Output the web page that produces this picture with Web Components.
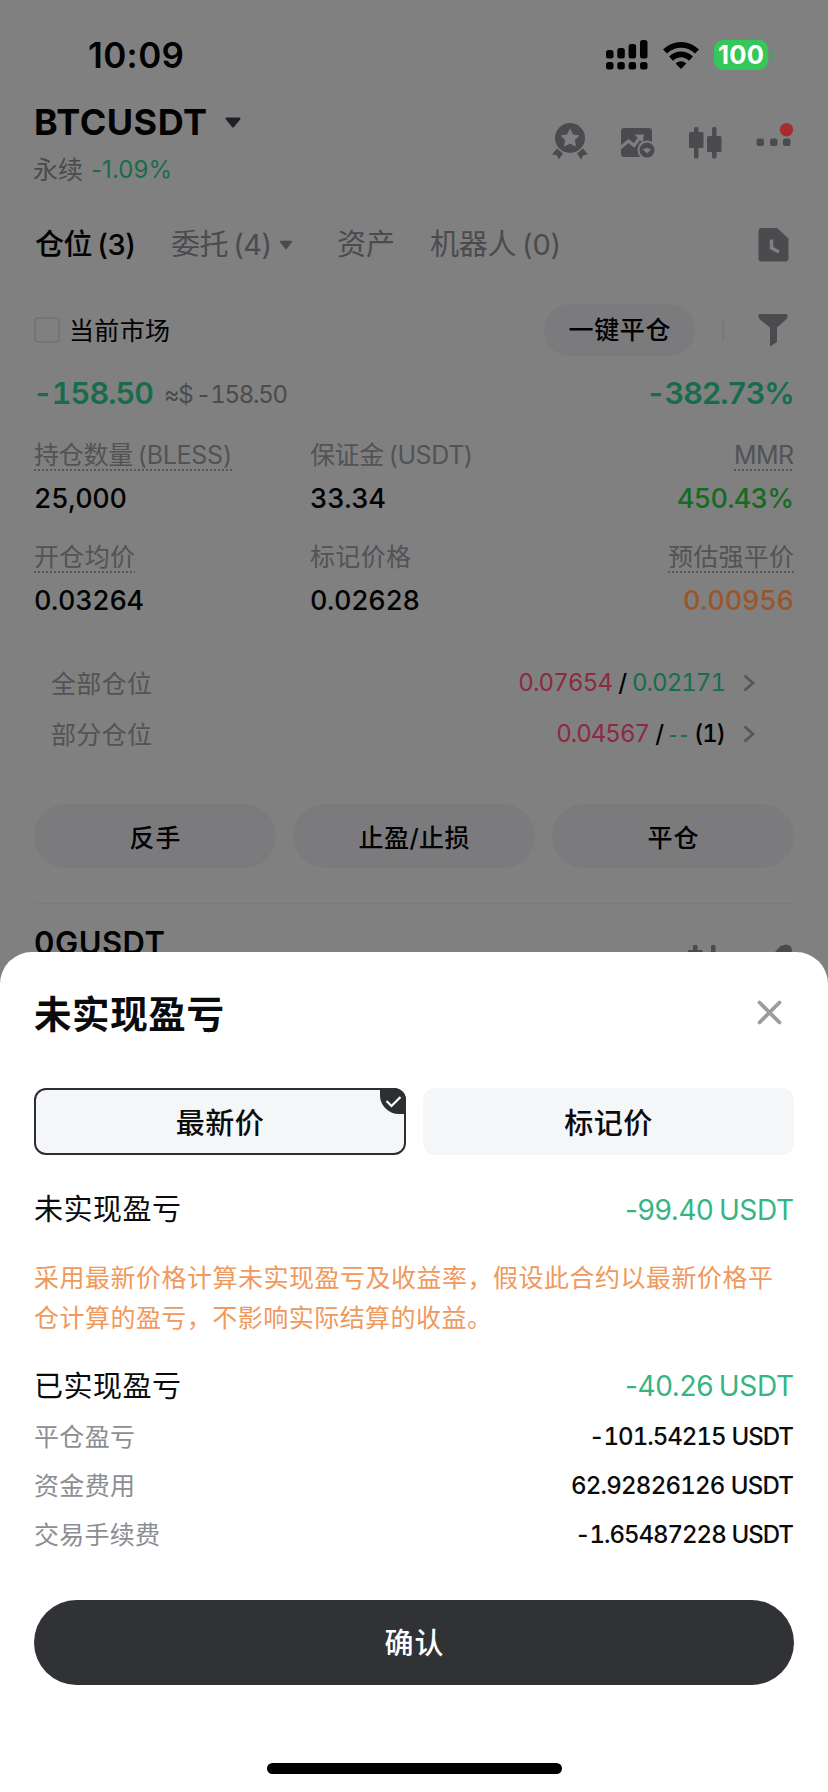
<!DOCTYPE html>
<html lang="zh-CN">
<head>
<meta charset="utf-8">
<title>未实现盈亏</title>
<style>
html,body{margin:0;height:100%;overflow:hidden;background:#808080}
body{font-family:Inter,"Noto Sans CJK SC",sans-serif;color:#020203;font-variant-ligatures:none;-webkit-font-smoothing:antialiased}
</style>
</head>
<body>
<trade-app></trade-app>
<script>
function define(name, css, html, connected) {
  const t = document.createElement('template');
  t.innerHTML = '<style>:host{display:block;box-sizing:border-box}*{box-sizing:border-box}svg{display:block;flex:none;overflow:visible}' + css + '</style>' + html;
  customElements.define(name, class extends HTMLElement {
    constructor() {
      super();
      this.attachShadow({mode: 'open'}).appendChild(t.content.cloneNode(true));
    }
    connectedCallback() { if (connected) connected.call(this); }
  });
}

/* One line of text: s = size, w = advance width, b = weight, c = colour */
define('text-run',
  ':host{display:block;flex:none;white-space:pre;line-height:1.2;padding-top:2px;word-spacing:-.07em}span{display:inline-block}',
  '<span><slot></slot></span>',
  function () {
    const span = this.shadowRoot.querySelector('span');
    const a = n => this.getAttribute(n);
    this.style.fontSize = a('s') + 'px';
    if (a('b')) this.style.fontWeight = a('b');
    if (a('c')) this.style.color = a('c');
    if (a('w')) {
      const n = [...this.textContent].length;
      const ls = (a('w') - span.getBoundingClientRect().width) / (n - 1);
      span.style.letterSpacing = ls + 'px';
      span.style.marginRight = -ls + 'px';
    }
  });

define('status-bar',
  ':host{display:flex;align-items:center;height:100px;padding:10px 55px 0 88px}.sp{flex:1}.wifi{margin:0 15px}.bat{width:54px;height:30px;border-radius:9px;background:#34c759;color:#fff;display:flex;align-items:center;justify-content:center}.bat text-run{padding-top:0}.nub{width:3px;height:10px;border-radius:0 3px 3px 0;background:#4c9c60;margin-left:2px}',
  `<text-run style="padding-top:0" s="35" b="600" w="96">10:09</text-run><span class="sp"></span>
  <svg width="42" height="30" viewBox="0 0 42 30"><g fill="#020202">
  <rect x="0" y="10" width="7.5" height="8.5" rx="2.5"/><rect x="11.3" y="8" width="7.5" height="10.5" rx="2.5"/><rect x="22.6" y="4" width="7.5" height="14.5" rx="2.5"/><rect x="34" y="0" width="7.5" height="18.5" rx="2.5"/>
  <rect x="0" y="22" width="7.5" height="7.5" rx="2.5"/><rect x="11.3" y="22" width="7.5" height="7.5" rx="2.5"/><rect x="22.6" y="22" width="7.5" height="7.5" rx="2.5"/><rect x="34" y="22" width="7.5" height="7.5" rx="2.5"/></g></svg>
  <svg class="wifi" width="36" height="27" viewBox="0 0 36 27"><g fill="none" stroke="#020202" stroke-width="5.600"><path d="M2 9.6C11 .6 25 .6 34 9.6"/><path d="M8 16.6C14 10.9 22 10.9 28 16.6"/></g><path d="M18 27l-5.4-5.4q5.4-4.6 10.8 0z" fill="#020202"/></svg>
  <div class="bat"><text-run s="25.500" b="700" w="46">100</text-run></div><span class="nub"></span>`);

define('market-header',
  `:host{display:flex;height:100px;padding:0 35px 0 34px}.l{flex:1}.t{height:45px;display:flex;align-items:center;gap:17px}.s{height:48px;display:flex;align-items:center;gap:8px;margin-left:-1px}
  .i{display:flex;align-items:flex-start;padding-top:23px}`,
  `<div class="l"><div class="t"><text-run style="padding-top:0" s="36" b="700" w="173">BTCUSDT</text-run>
  <svg width="18" height="12" viewBox="0 0 18 12"><path d="M2.5 1.5h13L9 9.5z" fill="#202126" stroke="#202126" stroke-width="2" stroke-linejoin="round"/></svg></div>
  <div class="s"><text-run s="25" c="#494b4e">永续</text-run><text-run s="24" w="81" c="#176d4c">-1.09%</text-run></div></div>
  <div class="i">
  <svg width="36" height="37" viewBox="0 0 36 37"><circle cx="18" cy="15" r="15" fill="#494b4e"/><path d="M18 6.5l2.7 5.4 6 .9-4.3 4.2 1 5.9-5.4-2.8-5.4 2.8 1-5.9-4.3-4.2 6-.9z" fill="#808080" stroke="#808080" stroke-linejoin="round"/><path d="M5 25.5l6 5-4.2 6-1.9-4.3L0 31.5zM31 25.5l-6 5 4.2 6 1.9-4.3 4.9-.7z" fill="#494b4e"/></svg>
  <svg style="margin:5px 0 0 32px" width="36" height="30" viewBox="0 0 36 30"><rect x="1" width="31" height="29" rx="3" fill="#494b4e"/><path d="M0 20l8.500-7 5.500 4.500 6-8" fill="none" stroke="#808080" stroke-width="3"/><path d="M14.500 6.500h9.500l-1.500 8.500-2.500-3z" fill="#808080"/><circle cx="27" cy="22" r="9.500" fill="#808080"/><circle cx="27" cy="22" r="7.500" fill="#494b4e"/><path d="M22.700 21.200l4.300-1.200 4.300 1.200-4.300 4.300z" fill="#808080"/></svg>
  <svg style="margin:4px 0 0 33px" width="33" height="32" viewBox="0 0 33 32"><g fill="#494b4e"><rect x="5" width="4.500" height="31.500" rx="1.500"/><rect x="0" y="5" width="14.500" height="16" rx="1.500"/><rect x="23" width="4.500" height="31.500" rx="1.500"/><rect x="18" y="9" width="14.500" height="16" rx="1.500"/></g></svg>
  <svg style="margin:0 0 0 34px" width="37" height="32" viewBox="0 0 37 32"><g fill="#494b4e"><rect x=".5" y="15.500" width="7.500" height="7.500" rx="2"/><rect x="14" y="15.500" width="7.500" height="7.500" rx="2"/><rect x="27" y="15.500" width="7.500" height="7.500" rx="2"/></g><circle cx="30.500" cy="6.700" r="6.700" fill="#a82c2c"/></svg>
  </div>`);

define('position-tabs',
  ':host{display:flex;align-items:center;height:89px;padding:0 39px 0 35px}',
  `<text-run s="29" b="500" w="101">仓位 (3)</text-run>
  <text-run style="margin-left:35px" s="29" w="101" c="#494b4e">委托 (4)</text-run>
  <svg style="margin-left:7px" width="14" height="10" viewBox="0 0 14 10"><path d="M1.500 1.500h11L7 8.500z" fill="#494b4e" stroke="#494b4e" stroke-width="1.500" stroke-linejoin="round"/></svg>
  <text-run style="margin-left:44px" s="29" w="58" c="#494b4e">资产</text-run>
  <text-run style="margin:0 auto 0 35px" s="29" w="131" c="#494b4e">机器人 (0)</text-run>
  <svg width="31" height="34" viewBox="0 0 31 34"><path d="M3.500 0H19L30.500 10.500v20a3 3 0 0 1-3 3h-24a3 3 0 0 1-3-3V3a3 3 0 0 1 3-3z" fill="#494b4e"/><path d="M13.500 11.500v8.500l7.500 4" fill="none" stroke="#808080" stroke-width="3.400"/></svg>`);

define('filter-bar',
  `:host{display:flex;align-items:center;height:82px;padding:0 40px 0 34px}
  .box{width:26px;height:26px;border:2px solid #747576;border-radius:4px;margin-right:9px}
  .pill{margin-left:auto;width:151px;height:52px;border-radius:26px;background:#7b7b7e;display:flex;align-items:center;justify-content:center}
  .bar{width:2px;height:20px;background:#79797b;margin:0 34px 0 27px}`,
  `<span class="box"></span><text-run s="25" w="101">当前市场</text-run>
  <div class="pill"><text-run style="padding-top:0" s="25" b="500" w="102">一键平仓</text-run></div><span class="bar"></span>
  <svg width="30" height="34" viewBox="0 0 30 34"><path d="M1.500 1h27q1.500 0 1 3-.5 1.500-2 3L19 14.500V29l-7 4.500v-19L2.500 7Q.8 5.500.5 4 0 1 1.500 1z" fill="#494b4e"/></svg>`);

define('pnl-line',
  ':host{display:flex;align-items:center;height:43px;padding:0 33px}text-run{font-feature-settings:"tnum"}',
  `<text-run s="30.500" b="600" w="121" c="#166c4b">-158.50</text-run>
  <text-run style="margin:4px auto 0 10px" s="24" w="124" c="#494b4e">≈$ -158.50</text-run>
  <text-run s="30.500" b="600" w="149" c="#166c4b">-382.73%</text-run>`);

define('stat-cell',
  ':host{display:flex;flex-direction:column;align-items:flex-start;height:88px}:host([end]){align-items:flex-end}.l{height:34px;display:flex;align-items:center}:host([tip]) .l{background:repeating-linear-gradient(90deg,#555759 0 2px,transparent 2px 4px) 0 100%/100% 2px no-repeat}.v{height:54px;display:flex;align-items:center;font-feature-settings:"tnum"}',
  '<div class="l"><slot name="label"></slot></div><div class="v"><slot></slot></div>');

define('stat-grid',
  ':host{display:grid;grid-template-columns:276px 1fr auto;row-gap:14px;padding:23px 34px 0}',
  `<stat-cell tip><text-run slot="label" s="25" w="198" c="#515355">持仓数量 (BLESS)</text-run><text-run s="27" b="500" w="93">25,000</text-run></stat-cell>
  <stat-cell><text-run slot="label" s="25" w="163" c="#515355">保证金 (USDT)</text-run><text-run s="27" b="500" w="76">33.34</text-run></stat-cell>
  <stat-cell tip end><text-run slot="label" s="25" w="60" c="#515355">MMR</text-run><text-run s="27" b="500" w="117" c="#156b20">450.43%</text-run></stat-cell>
  <stat-cell tip><text-run slot="label" s="25" w="101" c="#515355">开仓均价</text-run><text-run s="27" b="500" w="110">0.03264</text-run></stat-cell>
  <stat-cell><text-run slot="label" s="25" w="101" c="#515355">标记价格</text-run><text-run s="27" b="500" w="110">0.02628</text-run></stat-cell>
  <stat-cell tip end><text-run slot="label" s="25" w="126" c="#515355">预估强平价</text-run><text-run s="27" b="500" w="111" c="#9a562b">0.00956</text-run></stat-cell>`);

define('tpsl-row',
  ':host{display:flex;align-items:center;height:51px}.v{margin-left:auto;display:flex;align-items:center;font-feature-settings:"tnum"}svg{margin-left:17px}',
  '<slot name="label"></slot><div class="v"><slot></slot></div><svg width="12" height="18" viewBox="0 0 12 18"><path d="M1.500 1.500L10 9l-8.500 7.500" fill="none" stroke="#55575a" stroke-width="2.700"/></svg>');

define('tpsl-panel',
  ':host{margin:18px 42px 0 34px;height:127px;border:1px solid #7d7d7e;border-radius:6px;padding:11px 30px 0 16px}',
  `<tpsl-row><text-run slot="label" s="25" w="101" c="#515355">全部仓位</text-run>
  <text-run s="24" w="95" c="#8c2a40">0.07654</text-run><text-run style="margin:0 5px" s="24" b="500">/</text-run><text-run s="24" w="94" c="#176d4c">0.02171</text-run></tpsl-row>
  <tpsl-row><text-run slot="label" s="25" w="101" c="#515355">部分仓位</text-run>
  <text-run s="24" w="94" c="#8c2a40">0.04567</text-run><text-run style="margin:0 5px" s="24" b="500">/</text-run><text-run style="font-family:'Liberation Sans',sans-serif" s="24" w="19" c="#176d4c">--</text-run><text-run style="margin-left:6px" s="24" b="500" w="32">(1)</text-run></tpsl-row>`);

define('action-row',
  ':host{display:grid;grid-template-columns:repeat(3,1fr);gap:17px;padding:32px 34px 35px}div{height:64px;border-radius:32px;background:#7b7b7e;display:flex;align-items:center;justify-content:center;padding-top:2px}',
  '<div><text-run s="25" b="500" w="51">反手</text-run></div><div><text-run s="25" b="500" w="111">止盈/止损</text-run></div><div><text-run s="25" b="500" w="51">平仓</text-run></div>');

define('next-position',
  ':host{display:flex;align-items:center;height:82px;margin:0 34px;border-top:1px solid #7b7b7c}.i{margin-left:auto;display:flex;gap:55px;padding-top:29px}',
  `<text-run style="margin-bottom:6px" s="31" b="600" w="131">0GUSDT</text-run><div class="i">
  <svg width="31" height="28" viewBox="0 0 31 28"><g fill="#494b4e"><rect x="5" y="0" width="4.500" height="28" rx="1"/><rect x="0" y="5" width="14.500" height="16" rx="1"/><rect x="23" width="4.500" height="28" rx="1"/><rect x="18" y="9" width="13" height="15" rx="1"/></g></svg>
  <svg width="20" height="28" viewBox="0 0 20 28"><circle cx="12" cy="5.500" r="6" fill="#494b4e"/><path d="M9 2L0 12" stroke="#494b4e" stroke-width="5"/></svg></div>`);

define('price-option',
  ':host{position:relative;height:67px;border-radius:12px;background:#f4f6f8;display:flex;align-items:center;justify-content:center;padding-top:3px}:host([selected]){border:2px solid #2d2e32}svg{display:none;position:absolute;top:-2px;right:-2px}:host([selected]) svg{display:block}',
  '<slot></slot><svg width="26" height="26" viewBox="0 0 26 26"><path d="M0 0h14a12 12 0 0 1 12 12v14H19A19 19 0 0 1 0 8z" fill="#2d2e32"/><path d="M6.500 13l5 5L20.500 9" fill="none" stroke="#fff" stroke-width="2.200"/></svg>');

define('detail-row',
  ':host{display:flex;align-items:center;justify-content:space-between;height:49px;padding-top:2px}',
  '<slot></slot>');

define('pnl-sheet',
  `:host{position:absolute;left:0;right:0;top:952px;bottom:0;background:#fff;border-radius:32px 32px 0 0;padding:0 34px;color:#0a0b0d}
  .head{height:122px;display:flex;align-items:center;justify-content:space-between;padding-right:12px}
  .opts{display:grid;grid-template-columns:1fr 1fr;gap:17px;margin-top:14px}
  p{margin:25px 0 21px;line-height:40px;font-size:25px;color:#ef995c}
  p text-run{line-height:40px;padding-top:0}
  .num{font-feature-settings:"tnum";word-spacing:.02em}
  text-run[c="#8b8e92"]{padding-top:0}
  .ok{height:85px;border-radius:43px;background:#313236;display:flex;align-items:center;justify-content:center;margin-top:42px;padding-top:2px}
  .home{width:295px;height:11px;border-radius:6px;background:#000;margin:78px auto 0}`,
  `<div class="head"><text-run s="37.500" b="600" w="190">未实现盈亏</text-run>
  <svg width="25" height="25" viewBox="0 0 25 25"><path d="M2.500 1.500l20 20M22.500 1.500l-20 20" fill="none" stroke="#9a9c9e" stroke-width="3.800" stroke-linecap="round"/></svg></div>
  <div class="opts"><price-option selected><text-run s="29" b="500" w="88">最新价</text-run></price-option><price-option><text-run s="29" b="500" w="88">标记价</text-run></price-option></div>
  <detail-row style="margin-top:29px"><text-run s="29" w="147">未实现盈亏</text-run><text-run s="28" w="169" c="#35b583">-99.40 USDT</text-run></detail-row>
  <p><text-run s="25" w="739">采用最新价格计算未实现盈亏及收益率，假设此合约以最新价格平</text-run><text-run s="25" w="458">仓计算的盈亏，不影响实际结算的收益。</text-run></p>
  <detail-row style="height:52px"><text-run s="29" w="147">已实现盈亏</text-run><text-run s="28" w="169" c="#35b583">-40.26 USDT</text-run></detail-row>
  <detail-row><text-run s="25" w="101" c="#8b8e92">平仓盈亏</text-run><text-run class="num" s="24" b="500" w="205">-101.54215 USDT</text-run></detail-row>
  <detail-row><text-run s="25" w="101" c="#8b8e92">资金费用</text-run><text-run class="num" s="24" b="500" w="223">62.92826126 USDT</text-run></detail-row>
  <detail-row><text-run s="25" w="126" c="#8b8e92">交易手续费</text-run><text-run class="num" s="24" b="500" w="219">-1.65487228 USDT</text-run></detail-row>
  <div class="ok"><text-run s="29" b="500" w="59" c="#fff">确认</text-run></div>
  <div class="home"></div>`);

define('trade-app',
  ':host{position:relative;width:828px;height:1792px;background:#808080;overflow:hidden}',
  '<status-bar></status-bar><market-header></market-header><position-tabs></position-tabs><filter-bar></filter-bar><pnl-line></pnl-line><stat-grid></stat-grid><tpsl-panel></tpsl-panel><action-row></action-row><next-position></next-position><pnl-sheet></pnl-sheet>');
</script>
</body>
</html>
